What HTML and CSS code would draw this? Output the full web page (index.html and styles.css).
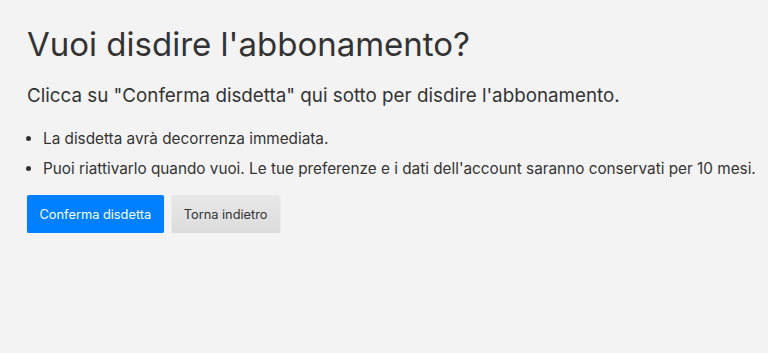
FILE: index.html
```html
<!DOCTYPE html>
<html lang="it">
<head>
<meta charset="utf-8">
<title>Disdetta</title>
<link rel="stylesheet" href="styles.css">
</head>
<body>
<main class="page">
  <h1 class="title">Vuoi disdire l'abbonamento?</h1>
  <h2 class="subtitle">Clicca su "Conferma disdetta" qui sotto per disdire l'abbonamento.</h2>
  <ul class="notes">
    <li>La disdetta avrà decorrenza immediata.</li>
    <li>Puoi riattivarlo quando vuoi. Le tue preferenze e i dati dell'account saranno conservati per 10 mesi.</li>
  </ul>
  <div class="actions">
    <button class="btn btn-primary" type="button">Conferma disdetta</button>
    <button class="btn btn-secondary" type="button">Torna indietro</button>
  </div>
</main>
</body>
</html>
```
FILE: styles.css
```css
html, body {
  margin: 0;
  padding: 0;
}
body {
  background: #f3f3f3;
  color: #333;
  font-family: Inter, "Noto Sans", sans-serif;
}
.page {
  padding: 22px 12px 0 27px;
}
.title {
  margin: 0;
  font-size: 33px;
  font-weight: 400;
  line-height: 44px;
}
.subtitle {
  margin: 17px 0 0;
  font-size: 18.8px;
  font-weight: 400;
  line-height: 26px;
}
.notes {
  margin: 20px 0 0;
  padding-left: 16px;
  font-size: 15.3px;
  line-height: 20px;
  white-space: nowrap;
}
.notes li + li {
  margin-top: 10px;
}
.actions {
  display: flex;
  gap: 8px;
  margin-top: 16px;
}
.btn {
  font-family: inherit;
  font-size: 12.8px;
  height: 38px;
  border: 0;
  border-radius: 2px;
  padding: 0 12.5px;
  box-shadow: 0 1px 1px rgba(0,0,0,0.25);
}
.btn-primary {
  background: #0080ff;
  color: #fff;
}
.btn-secondary {
  background: linear-gradient(#e8e8e8, #dcdcdc);
  color: #333;
  padding: 0 12px;
}
```
